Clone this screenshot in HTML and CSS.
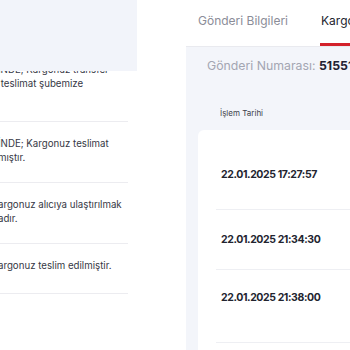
FILE: index.html
```html
<!DOCTYPE html>
<html lang="tr">
<head>
    <meta charset="UTF-8">
    <title>Kargo Takip</title>
    <link rel="stylesheet" href="styles.css">
</head>
<body>
    <div class="page">
        <div class="side">
            <div class="side-head"></div>
            <div class="moves">
                <div class="move first">
                    <div class="line">İNDE; Kargonuz transfer</div>
                    <div class="line">&nbsp;teslimat şubemize</div>
                </div>
                <div class="move">
                    <div class="line">İNDE; Kargonuz teslimat</div>
                    <div class="line">mıştır.</div>
                </div>
                <div class="move">
                    <div class="line">argonuz alıcıya ulaştırılmak</div>
                    <div class="line">adır.</div>
                </div>
                <div class="move last">
                    <div class="line">argonuz teslim edilmiştir.</div>
                </div>
            </div>
        </div>

        <div class="main">
            <div class="tabs">
                <div class="tab">Gönderi Bilgileri</div>
                <div class="tab active">Kargo Hareketleri</div>
            </div>
            <div class="panel">
                <div class="shipment">Gönderi Numarası: <b>515517748620</b></div>
                <div class="col-head">İşlem Tarihi</div>
                <div class="card">
                    <div class="row r1"><span class="date">22.01.2025 17:27:57</span></div>
                    <div class="row r2"><span class="date">22.01.2025 21:34:30</span></div>
                    <div class="row r3"><span class="date">22.01.2025 21:38:00</span></div>
                </div>
            </div>
        </div>
    </div>
</body>
</html>
```

FILE: styles.css
```css
body { margin: 0; background: #fff; font-family: Inter, "Open Sans", sans-serif; color: #2b2d3a; }
.page { display: flex; width: 350px; height: 350px; overflow: hidden; }

.side { position: relative; width: 186px; flex-shrink: 0; overflow: hidden; }
.side-head { position: absolute; top: 0; left: 0; width: 137px; height: 71px; background: #f2f4fa; }
.moves { padding-top: 56px; width: 128px; }
.move { border-bottom: 1px solid #ececf0; padding: 15px 0 17px; font-size: 9.7px; line-height: 14px; color: #363845; white-space: nowrap; margin-left: -2px; }
.move.first { padding: 7px 0 30px; }
.move.last { padding-bottom: 20px; }

.main { flex: 1; min-width: 0; display: flex; flex-direction: column; overflow: hidden; }
.tabs { display: flex; gap: 33px; height: 46px; padding-left: 12px; border-bottom: 1px solid #e9eaef; white-space: nowrap; }
.tab { font-size: 12px; color: #8b8d98; padding-top: 13px; height: 33px; box-sizing: border-box; }
.tab.active { color: #23252f; border-bottom: 3px solid #d3212b; height: 46px; box-sizing: border-box; margin-left: -1px; padding-left: 1px; }

.panel { flex: 1; background: #f3f5fa; padding-left: 12px; }
.shipment { font-size: 12.3px; color: #a3a6b2; padding: 11px 0 0 9px; line-height: 16px; white-space: nowrap; }
.shipment b { color: #1f2233; font-weight: 700; }
.col-head { font-size: 8px; color: #3d3f4a; padding: 34px 0 0 22px; line-height: 10px; }
.card { background: #fff; border-radius: 6px 0 0 0; margin-top: 12px; width: 300px; height: 250px; }
.row { margin-left: 18px; padding-left: 5px; border-bottom: 1px solid #eeeff3; display: flex; align-items: center; box-sizing: border-box; }
.r1 { height: 80px; padding-top: 11px; }
.r2 { height: 60px; }
.r3 { height: 73px; padding-bottom: 16px; }
.date { font-size: 10.5px; font-weight: 700; letter-spacing: -0.4px; color: #22242f; line-height: 14px; white-space: nowrap; }
```
